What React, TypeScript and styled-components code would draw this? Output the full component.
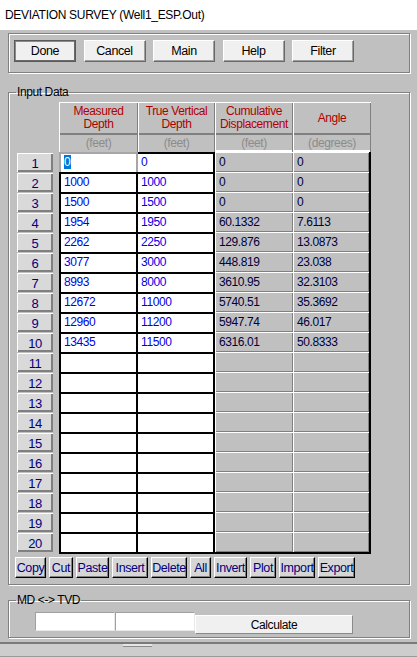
import React from "react";
import styled, { createGlobalStyle } from "styled-components";

const GlobalStyle = createGlobalStyle`
  html, body {
    margin: 0;
    padding: 0;
    background: #d0d0d0;
  }
  body {
    font-family: "Liberation Sans", Arial, sans-serif;
  }
`;

const survey: string[][] = [
  ["0", "0", "0", "0"],
  ["1000", "1000", "0", "0"],
  ["1500", "1500", "0", "0"],
  ["1954", "1950", "60.1332", "7.6113"],
  ["2262", "2250", "129.876", "13.0873"],
  ["3077", "3000", "448.819", "23.038"],
  ["8993", "8000", "3610.95", "32.3103"],
  ["12672", "11000", "5740.51", "35.3692"],
  ["12960", "11200", "5947.74", "46.017"],
  ["13435", "11500", "6316.01", "50.8333"],
];

const rows = Array.from({ length: 20 }, (_, i) => survey[i] ?? ["", "", "", ""]);

const headers = [
  { title: "Measured\nDepth", unit: "(feet)" },
  { title: "True Vertical\nDepth", unit: "(feet)" },
  { title: "Cumulative\nDisplacement", unit: "(feet)" },
  { title: "Angle", unit: "(degrees)" },
];

const tools = [
  { label: "Copy", w: 31 },
  { label: "Cut", w: 24 },
  { label: "Paste", w: 33 },
  { label: "Insert", w: 36 },
  { label: "Delete", w: 36 },
  { label: "All", w: 21 },
  { label: "Invert", w: 33 },
  { label: "Plot", w: 26 },
  { label: "Import", w: 36 },
  { label: "Export", w: 37 },
];

const App: React.FC = () => {
  return (
    <>
      <GlobalStyle />
      <Window>
        <TitleBar>DEVIATION SURVEY (Well1_ESP.Out)</TitleBar>
        <Body>
          <ActionBox>
            <ActionButton $default>Done</ActionButton>
            <ActionButton>Cancel</ActionButton>
            <ActionButton>Main</ActionButton>
            <ActionButton>Help</ActionButton>
            <ActionButton>Filter</ActionButton>
          </ActionBox>

          <Group>
            <Legend>Input Data</Legend>
            <GridRow $h={33}>
              <span />
              {headers.map((h) => (
                <HeadCell key={h.title}>{h.title}</HeadCell>
              ))}
            </GridRow>
            <GridRow $h={17}>
              <span />
              {headers.map((h, i) => (
                <UnitCell key={h.title} $calc={i > 1}>
                  {h.unit}
                </UnitCell>
              ))}
            </GridRow>
            {rows.map((r, i) => {
              const last = i === rows.length - 1;
              return (
                <GridRow key={i} $h={last ? 22 : 20}>
                  <RowNum>{i + 1}</RowNum>
                  <InputCell $first $focused={i === 0} $last={last}>
                    {i === 0 ? <Selected>{r[0]}</Selected> : r[0]}
                  </InputCell>
                  <InputCell $last={last}>{r[1]}</InputCell>
                  <CalcCell $last={last}>{r[2]}</CalcCell>
                  <CalcCell $last={last} $edge>
                    {r[3]}
                  </CalcCell>
                </GridRow>
              );
            })}
            <ToolRow>
              {tools.map((t) => (
                <ToolButton key={t.label} $w={t.w}>
                  {t.label}
                </ToolButton>
              ))}
            </ToolRow>
          </Group>

          <ConvertGroup>
            <Legend>MD &lt;-&gt; TVD</Legend>
            <ConvertRow>
              <Field />
              <Field />
              <CalcButton>Calculate</CalcButton>
            </ConvertRow>
          </ConvertGroup>
        </Body>
        <StatusStrip>
          <Grip />
        </StatusStrip>
      </Window>
    </>
  );
};

export default App;

const Window = styled.div`
  width: 417px;
  height: 657px;
  display: flex;
  flex-direction: column;
  overflow: hidden;
`;

const TitleBar = styled.div`
  height: 30px;
  flex: none;
  background: #ffffff;
  display: flex;
  align-items: center;
  padding-left: 5px;
  font-size: 12px;
  letter-spacing: -0.3px;
  color: #000;
`;

const Body = styled.div`
  background: #c0c0c0;
  padding: 3px 7px 4px 8px;
  border-left: 1px solid #a8a8a8;
  border-bottom: 2px solid #7a7a7a;
  margin-left: -1px;
  font-size: 12px;
  letter-spacing: -0.4px;
`;

const ActionBox = styled.div`
  height: 40px;
  box-sizing: border-box;
  border: 1px solid #808080;
  box-shadow: inset 1px 1px 0 #ffffff, 1px 1px 0 #ffffff;
  padding: 6px 0 0 5px;
  display: flex;
  gap: 7.5px;
`;

const ActionButton = styled.div<{ $default?: boolean }>`
  width: 62px;
  height: 22px;
  box-sizing: border-box;
  background: #f0f0f0;
  display: flex;
  align-items: center;
  justify-content: center;
  color: #000;
  font-size: 12.5px;
  border: 1px solid;
  border-color: ${(p) => (p.$default ? "#5a5a5a" : "#ffffff #696969 #696969 #ffffff")};
  box-shadow: ${(p) =>
    p.$default
      ? "inset -1px -1px 0 #696969, inset 1px 1px 0 #8a8a8a"
      : "inset -1px -1px 0 #a0a0a0"};
`;

const Group = styled.fieldset`
  margin: 12px 0 0 0;
  padding: 3px 0 6px 8px;
  border: 1px solid #808080;
  box-shadow: inset 1px 1px 0 #ffffff, 1px 1px 0 #ffffff;
  min-width: 0;
`;

const ConvertGroup = styled(Group)`
  margin-top: 8px;
  padding: 5px 0 3px 8px;
`;

const Legend = styled.legend`
  padding: 0 1px;
  margin-left: -1px;
  font-size: 12px;
  line-height: 14px;
  color: #000;
`;

const GridRow = styled.div<{ $h: number }>`
  display: grid;
  grid-template-columns: 42px 79px 77px 78px 78px;
  height: ${(p) => p.$h}px;
`;

const HeadCell = styled.div`
  background: #c0c0c0;
  box-shadow: inset 1px 1px 0 #ffffff, inset -1px -2px 0 #808080;
  color: #b00000;
  white-space: pre-line;
  text-align: center;
  line-height: 13px;
  display: flex;
  align-items: center;
  justify-content: center;
  padding-bottom: 1px;
  box-sizing: border-box;
`;

const UnitCell = styled.div<{ $calc?: boolean }>`
  color: #8c8c8c;
  text-align: center;
  line-height: 16px;
  box-shadow: inset 1px 0 0 #ffffff, inset -1px 0 0 #808080
    ${(p) => (p.$calc ? ", inset 0 -2px 0 #ffffff" : "")};
`;

const RowNum = styled.div`
  width: 36px;
  height: 19px;
  margin-top: 1px;
  box-sizing: border-box;
  background: #d9d9d9;
  border-top: 1px solid #ffffff;
  border-left: 1px solid #ffffff;
  box-shadow: inset -2px -2px 0 #808080;
  color: #000080;
  font-size: 13px;
  display: flex;
  align-items: center;
  justify-content: center;
  padding-right: 1px;
`;

const InputCell = styled.div<{ $first?: boolean; $focused?: boolean; $last?: boolean }>`
  background: #ffffff;
  box-sizing: border-box;
  border-top: 2px solid ${(p) => (p.$focused ? "#a6a6a6" : "#000")};
  border-right: 2px solid ${(p) => (p.$focused ? "#a6a6a6" : "#000")};
  border-left: ${(p) => (p.$first ? `2px solid ${p.$focused ? "#a6a6a6" : "#000"}` : "none")};
  border-bottom: ${(p) => (p.$last ? "2px solid #000" : "none")};
  color: #0000e8;
  padding: 2px 0 0 3px;
  line-height: 13px;
`;

const Selected = styled.span`
  background: #0078d7;
  color: #ffffff;
  padding-right: 1px;
`;

const CalcCell = styled.div<{ $last?: boolean; $edge?: boolean }>`
  background: #c0c0c0;
  box-sizing: border-box;
  box-shadow: inset 1px 1px 0 #ffffff, inset -1px -1px 0 #808080;
  border-right: ${(p) => (p.$edge ? "2px solid #000" : "none")};
  border-bottom: ${(p) => (p.$last ? "2px solid #000" : "none")};
  color: #00003c;
  padding: 4px 0 0 4px;
  line-height: 13px;
`;

const ToolRow = styled.div`
  display: flex;
  gap: 3px;
  margin: 3px 0 0 -2px;
`;

const ToolButton = styled.div<{ $w: number }>`
  width: ${(p) => p.$w}px;
  height: 21px;
  box-sizing: border-box;
  background: #d6d6d6;
  border: 1px solid;
  border-color: #ffffff #000000 #000000 #ffffff;
  box-shadow: inset -1px -1px 0 #808080;
  color: #000080;
  font-size: 12.5px;
  display: flex;
  align-items: center;
  justify-content: center;
`;

const ConvertRow = styled.div`
  display: flex;
  align-items: flex-start;
  margin-left: 18px;
`;

const Field = styled.div`
  width: 80px;
  height: 19px;
  box-sizing: border-box;
  background: #ffffff;
  border: 1px solid;
  border-color: #a0a0a0 #e8e8e8 #e8e8e8 #a0a0a0;
`;

const CalcButton = styled.div`
  width: 158px;
  height: 19px;
  margin-top: 3px;
  box-sizing: border-box;
  background: #f0f0f0;
  border: 1px solid;
  border-color: #ffffff #8a8a8a #8a8a8a #ffffff;
  color: #000;
  display: flex;
  align-items: center;
  justify-content: center;
`;

const StatusStrip = styled.div`
  flex: 1;
  background: #cdcdcd;
  border-bottom: 1px solid #9a9a9a;
  display: flex;
  align-items: flex-start;
`;

const Grip = styled.div`
  width: 29px;
  height: 2px;
  margin-left: 123px;
  background: #e6e6e6;
  border-bottom: 1px solid #8a8a8a;
`;
